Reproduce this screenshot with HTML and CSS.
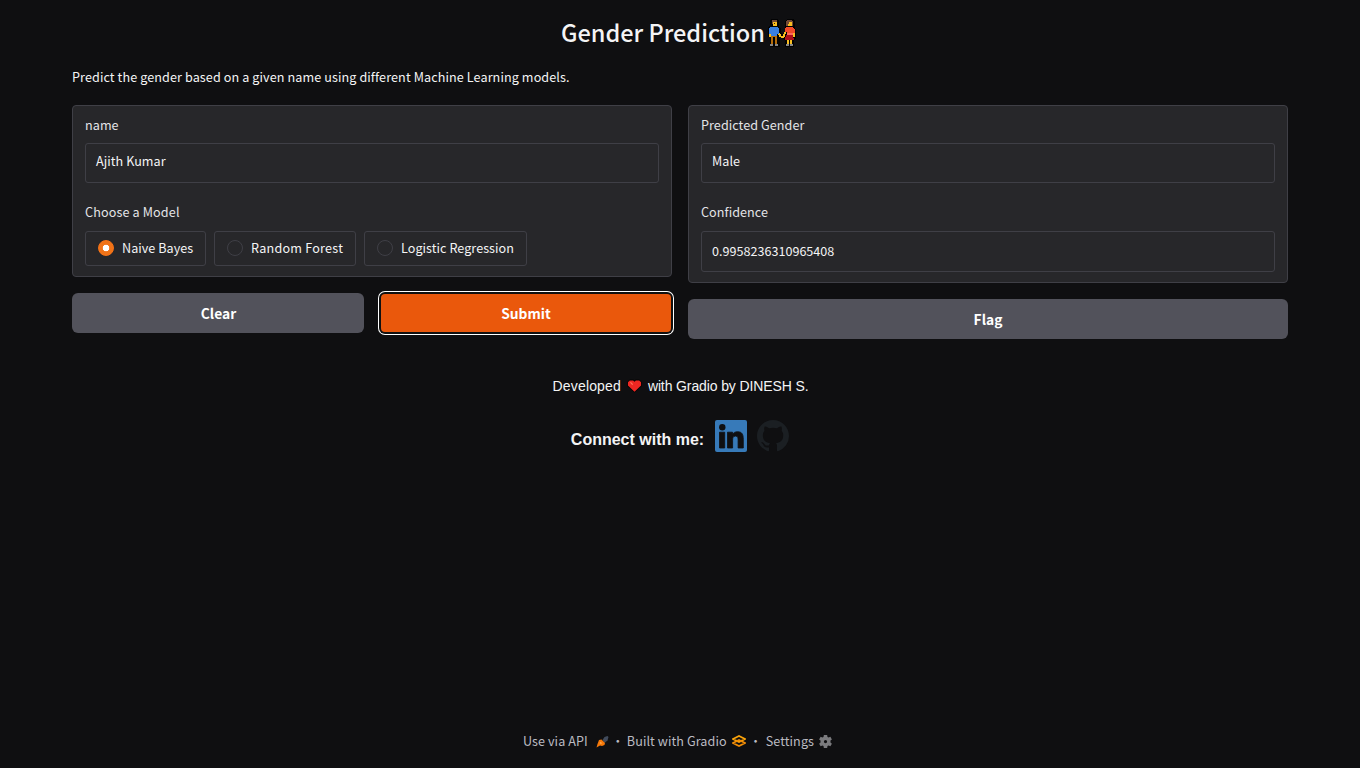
FILE: index.html
```
<!DOCTYPE html>
<html lang="en">
<head>
<meta charset="utf-8">
<title>Gender Prediction</title>
<link rel="stylesheet" href="styles.css">
</head>
<body>
<main class="app">
  <h1 class="title"><span class="title-text">Gender Prediction</span>
    <svg class="couple" viewBox="0 0 28 28" shape-rendering="crispEdges">
      <path d="M3 0h6l2 2v5l2 3v4l2 1 2-2V2l2-2h6l2 2v6l1 3v9l-2 1v7h-9v-7l-2-1v-2h-3v10H2V18H0V9l2-3V2z" fill="#020203"/>
      <path d="M5 3h4v4H5zM1 15h2v3H1zM10 14h2v1h1v2h2v-2h1v-2h2v2h-1v3h-1v1h-3v-1h-2v-2h-1z" fill="#f9bd20"/>
      <path d="M4 1h5v2H5v2H4z" fill="#754b36"/>
      <path d="M6 4h1v1H6zM23 4h1v1h-1z" fill="#30211b"/>
      <path d="M2 8h8l1 2v5h-2v2H3v-2H1V9z" fill="#397fe0"/>
      <path d="M3 17h6v8H7v-7H5v7H3z" fill="#b46c09"/>
      <path d="M2 25h3v2H2zM7 25h3v2H7zM18 25h3v2h-3zM22 25h3v2h-3z" fill="#858585"/>
      <path d="M20 3h4v4h-4zM25 13h2v5h-2zM19 21h2v4h-2zM22 21h2v4h-2z" fill="#f9bd20"/>
      <path d="M19 1h5l1 2v4h-1V3h-3v2h-1v2h-2V3z" fill="#754b36"/>
      <path d="M18 8h7l2 3v3h-2v1h-6v-2h-2V9z" fill="#f44a29"/>
      <path d="M19 14h6v2h-6z" fill="#ff675b"/>
      <path d="M18 16h7l1 5h-9z" fill="#ad0e19"/>
    </svg>
  </h1>
  <p class="description">Predict the gender based on a given name using different Machine Learning models.</p>
  <div class="columns">
    <section class="column">
      <div class="panel panel-inputs">
        <div class="label">name</div>
        <div class="field">Ajith Kumar</div>
        <div class="label label-second wide">Choose a Model</div>
        <div class="options">
          <div class="option w1"><i class="radio checked"></i><span>Naive Bayes</span></div>
          <div class="option w2"><i class="radio"></i><span class="wider">Random Forest</span></div>
          <div class="option w3"><i class="radio"></i><span>Logistic Regression</span></div>
        </div>
      </div>
      <div class="actions">
        <div class="button">Clear</div>
        <div class="button primary">Submit</div>
      </div>
    </section>
    <section class="column">
      <div class="panel panel-outputs">
        <div class="label">Predicted Gender</div>
        <div class="field">Male</div>
        <div class="label label-second">Confidence</div>
        <div class="field field-number">0.9958236310965408</div>
      </div>
      <div class="actions"><div class="button">Flag</div></div>
    </section>
  </div>
  <p class="credit"><span class="developed">Developed</span>
    <svg class="heart" viewBox="0 0 16 14"><path d="M3 0h4l1 1 1-1h4l3 3v4l-8 7-8-7V3z" fill="#050505"/><path d="M3 1h3.500L8 2.500 9.500 1H13l2 2v3.500L8 13 1 6.500V3z" fill="#ee2722"/><path d="M3 3h1.500l2 2-1 1z" fill="#ff7358"/></svg>
    <span class="author">with Gradio by DINESH S.</span></p>
  <div class="connect"><span>Connect with me:</span>
    <svg class="linkedin" viewBox="0 0 32 32"><rect width="32" height="32" rx="2" fill="#377ab9"/><circle cx="7.300" cy="7.200" r="3.200" fill="#0f0f11"/><path d="M4.500 12.200h5.200v15.800H4.500zM12.500 12.200h5v2.200c.9-1.600 2.700-2.700 5-2.700 4.900 0 5.800 3.200 5.800 7.500V28h-5.200v-7.700c0-1.900-.1-4.200-2.600-4.200s-2.900 2-2.900 4.100V28h-5.100z" fill="#0f0f11" stroke="#0f0f11" stroke-width=".8"/></svg>
    <svg class="github" viewBox="0 0 16 16"><path fill="#1b1f23" d="M8 0C3.580 0 0 3.580 0 8c0 3.540 2.290 6.530 5.470 7.590.4.070.55-.17.55-.38 0-.19-.01-.82-.01-1.490-2.010.37-2.530-.49-2.690-.94-.09-.23-.48-.94-.82-1.130-.28-.15-.68-.52-.01-.53.63-.01 1.080.58 1.230.82.72 1.210 1.870.87 2.330.66.070-.52.28-.87.51-1.070-1.780-.2-3.640-.89-3.640-3.950 0-.87.31-1.590.82-2.150-.08-.2-.36-1.020.08-2.120 0 0 .67-.21 2.200.82.640-.18 1.320-.27 2-.27s1.360.09 2 .27c1.530-1.040 2.200-.82 2.200-.82.44 1.100.16 1.920.08 2.120.51.56.82 1.270.82 2.150 0 3.070-1.870 3.750-3.650 3.950.29.25.54.73.54 1.480 0 1.070-.01 1.930-.01 2.200 0 .21.15.46.55.38A8.010 8.010 0 0 0 16 8c0-4.420-3.580-8-8-8z"/></svg>
  </div>
</main>
<footer class="footer">
  <span class="f-api">Use via API</span>
  <svg class="rocket" viewBox="0 0 13 13"><path d="M6.500 5l2-3 3-1 1 1-1 3.500L8.500 8z" fill="#414b5c"/><path d="M3 5l2.500-.5L9 8l-.5 2L6 11l-2-.5L.5 12.500 1.500 9z" fill="#f57809"/><path d="M3.500 8l1-1L6 8 5 9z" fill="#ffb057"/></svg>
  <span class="dot">·</span>
  <span class="f-built">Built with Gradio</span>
  <svg class="gradio" viewBox="0 0 14 12" fill="none" stroke-width="1.700"><path d="M1 4L7 1l6 3-6 3z" stroke="#faa30a"/><path d="M1 8l6-3 6 3-6 3z" stroke="#f08c06"/></svg>
  <span class="dot">·</span>
  <span class="f-settings">Settings</span>
  <svg class="gear" viewBox="0 0 24 24"><path fill="#7b7b7e" fill-rule="evenodd" d="M9 0h6l.7 3.500 2 1.100 3.300-1.200 2.800 4.800-2.600 2.100v3.400l2.600 2.300-2.800 4.600-3.300-1.200-2 1.100L15 24H9l-.7-3.500-2-1.100L3 20.600.2 16l2.600-2.300v-3.400L.2 8.200 3 3.400l3.300 1.200 2-1.100zM12 9a3 3 0 1 0 0 6 3 3 0 0 0 0-6z"/></svg>
</footer>
</body>
</html>
```
FILE: styles.css
```
* { box-sizing: border-box; }
body {
  margin: 0;
  height: 768px;
  overflow: hidden;
  display: flex;
  flex-direction: column;
  justify-content: space-between;
  background: #0f0f11;
  color: #f4f4f5;
  font-family: "Noto Sans CJK SC", sans-serif;
  font-size: 12.6px;
  line-height: 20px;
  white-space: nowrap;
}
svg { display: block; flex: none; }
.app { padding: 0 72px; }
.title {
  display: flex;
  justify-content: center;
  gap: 3px;
  height: 30px;
  margin: 17px 0 0;
  padding-right: 3px;
  font-size: 23.5px;
  font-weight: 500;
  line-height: 30px;
}
.couple { width: 28px; height: 28px; margin-top: 2px; }
.description { margin: 20px 0 18px; letter-spacing: 0.1px; }
.columns { display: flex; gap: 16px; align-items: flex-start; }
.column { flex: 1; min-width: 0; }
.panel {
  padding: 9px 12px;
  border: 1px solid #3f3f46;
  border-radius: 4px;
  background: #27272a;
}
.panel-inputs { height: 172px; }
.panel-outputs { height: 178px; }
.label { height: 20px; color: #e4e4e7; letter-spacing: 0.06px; }
.label-second { margin-top: 19px; }
.wide { letter-spacing: 0.13px; }
.wider { letter-spacing: 0.23px; }
.field {
  height: 40px;
  margin-top: 8px;
  padding: 7px 10px;
  border: 1px solid #3f3f46;
  border-radius: 3px;
  letter-spacing: 0.06px;
}
.field-number { height: 41px; margin-top: 9px; padding-top: 9px; letter-spacing: 0; }
.options { display: flex; gap: 8px; margin-top: 9px; }
.option {
  display: flex;
  align-items: center;
  gap: 8px;
  height: 35px;
  padding: 0 12px 1px;
  border: 1px solid #3f3f46;
  border-radius: 3px;
  letter-spacing: 0.05px;
}
.w1 { width: 121px; }
.w2 { width: 142px; }
.w3 { width: 163px; }
.radio {
  flex: none;
  width: 16px;
  height: 16px;
  border: 1px solid #3f3f46;
  border-radius: 50%;
}
.checked { border-color: #f97316; background: radial-gradient(circle, #fff 0 3px, #f07318 3.6px); }
.actions { display: flex; gap: 17px; margin-top: 16px; }
.button {
  flex: 1;
  height: 40px;
  border-radius: 6px;
  background: #52525b;
  color: #fff;
  font-size: 13.8px;
  font-weight: 700;
  line-height: 40px;
  text-align: center;
}
.actions .button:not(:only-child):first-child { flex: 0 0 292px; padding-left: 1px; }
.primary {
  height: 38px;
  margin: 1px 1px 1px 0;
  border-radius: 4px;
  background: #ea580c;
  line-height: 38px;
  box-shadow: 0 0 0 2px #101010, 0 0 0 3px #fff;
}
.credit {
  display: flex;
  justify-content: center;
  gap: 6px;
  height: 20px;
  margin: 37px 0 0;
  padding-left: 1px;
  font: 14px/20px "Liberation Sans", Arial, sans-serif;
}
.developed { letter-spacing: 0.15px; }
.author { letter-spacing: -0.12px; }
.heart { width: 15px; height: 14px; margin-top: 3px; }
.connect {
  display: flex;
  justify-content: center;
  height: 32px;
  margin-top: 24px;
  font: bold 16px/39px "Liberation Sans", Arial, sans-serif;
}
.linkedin { width: 32px; height: 32px; margin-left: 11px; }
.github { width: 32px; height: 32px; margin-left: 10px; }
.footer {
  display: flex;
  justify-content: center;
  align-items: center;
  height: 20px;
  margin-bottom: 17px;
  padding-right: 5px;
  color: #bbbbc2;
  letter-spacing: 0.08px;
}
.rocket { width: 13px; height: 13px; margin-left: 8px; }
.gradio { width: 14px; height: 12px; margin-left: 5px; }
.gear { width: 13px; height: 13px; margin-left: 5px; }
.dot { width: 18px; text-align: center; }
.gradio + .dot { width: 20px; }
```
